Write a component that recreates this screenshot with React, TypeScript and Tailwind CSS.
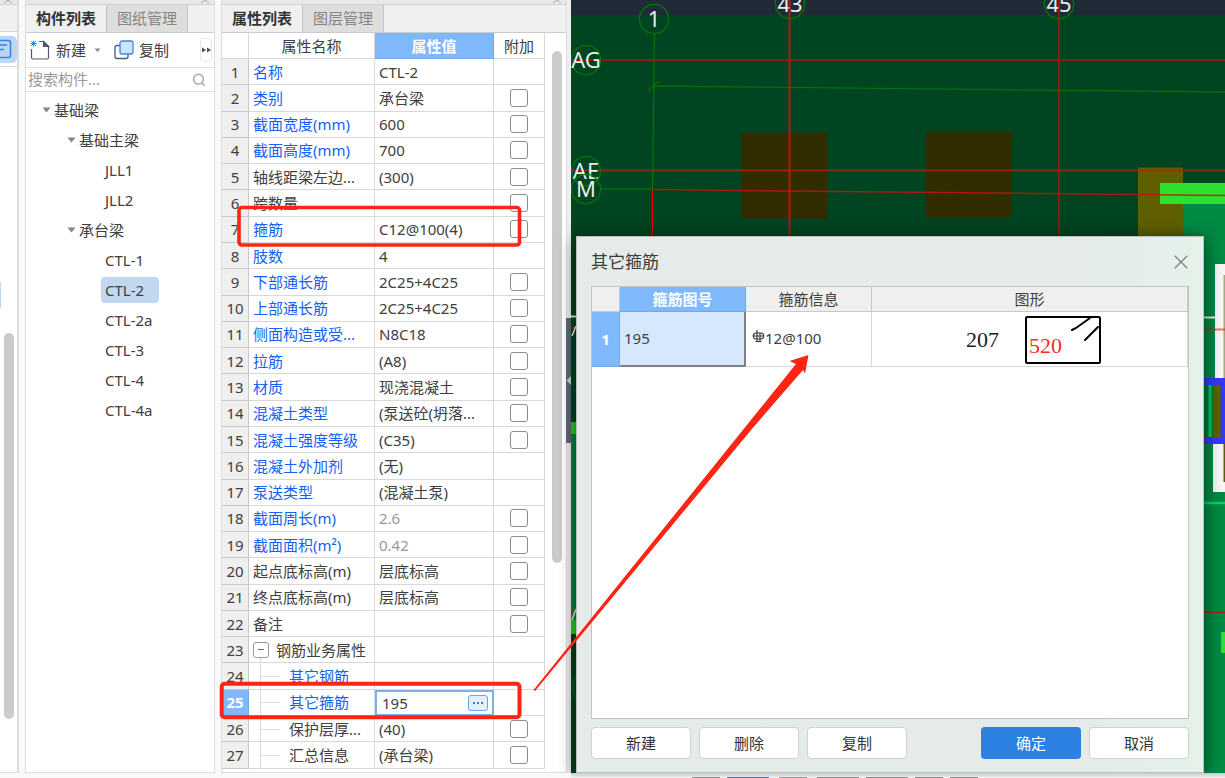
import React from "react";

type Prop = {
  name: string;
  value?: string;
  link?: boolean;
  check?: boolean;
  muted?: boolean;
  kind?: "group" | "child";
};

const props: Prop[] = [
  { name: "名称", value: "CTL-2", link: true },
  { name: "类别", value: "承台梁", link: true, check: true },
  { name: "截面宽度(mm)", value: "600", link: true, check: true },
  { name: "截面高度(mm)", value: "700", link: true, check: true },
  { name: "轴线距梁左边...", value: "(300)", check: true },
  { name: "跨数量", check: true },
  { name: "箍筋", value: "C12@100(4)", link: true, check: true },
  { name: "肢数", value: "4", link: true },
  { name: "下部通长筋", value: "2C25+4C25", link: true, check: true },
  { name: "上部通长筋", value: "2C25+4C25", link: true, check: true },
  { name: "侧面构造或受...", value: "N8C18", link: true, check: true },
  { name: "拉筋", value: "(A8)", link: true, check: true },
  { name: "材质", value: "现浇混凝土", link: true, check: true },
  { name: "混凝土类型", value: "(泵送砼(坍落...", link: true, check: true },
  { name: "混凝土强度等级", value: "(C35)", link: true, check: true },
  { name: "混凝土外加剂", value: "(无)", link: true },
  { name: "泵送类型", value: "(混凝土泵)", link: true },
  { name: "截面周长(m)", value: "2.6", link: true, check: true, muted: true },
  { name: "截面面积(m²)", value: "0.42", link: true, check: true, muted: true },
  { name: "起点底标高(m)", value: "层底标高", check: true },
  { name: "终点底标高(m)", value: "层底标高", check: true },
  { name: "备注", check: true },
  { name: "钢筋业务属性", kind: "group" },
  { name: "其它钢筋", link: true, kind: "child" },
  { name: "其它箍筋", value: "195", link: true, kind: "child" },
  { name: "保护层厚...", value: "(40)", check: true, kind: "child" },
  { name: "汇总信息", value: "(承台梁)", check: true, kind: "child" },
];

const SELECTED = 24;

const tree = [
  { label: "基础梁", level: 0 },
  { label: "基础主梁", level: 1 },
  { label: "JLL1", level: 2 },
  { label: "JLL2", level: 2 },
  { label: "承台梁", level: 1 },
  { label: "CTL-1", level: 2 },
  { label: "CTL-2", level: 2 },
  { label: "CTL-2a", level: 2 },
  { label: "CTL-3", level: 2 },
  { label: "CTL-4", level: 2 },
  { label: "CTL-4a", level: 2 },
];

const indent = ["pl-4", "pl-[41px]", "pl-[75px]"];

function TitleStrip() {
  return (
    <div className="flex h-[5px] shrink-0 items-start justify-end border-b border-[#cfd2d5] bg-[#e8e8e8] pr-1">
      <svg width="10" height="3" viewBox="0 0 10 3" fill="none" stroke="#a5a5a5">
        <path d="M1 3 5 0 9 3" />
      </svg>
    </div>
  );
}

function Tabs({ items, label }: { items: string[]; label: string }) {
  return (
    <div role="tablist" aria-label={label} className="flex h-7 shrink-0 border-b border-[#c8ccd0] bg-[#f0f0f0]">
      {items.map((t, i) => (
        <button
          key={t}
          role="tab"
          aria-selected={i === 0}
          className={
            i === 0
              ? "w-[81px] border-r border-[#bfc5ca] font-bold text-[#333]"
              : "w-[81px] border-r border-[#bfc5ca] bg-[#dedede] text-[#858585]"
          }
        >
          {t}
        </button>
      ))}
    </div>
  );
}

function SideStrip() {
  return (
    <aside className="relative flex w-[19px] shrink-0 flex-col border-r-2 border-b border-[#dcdcdc] bg-white">
      <TitleStrip />
      <div className="h-[27px] shrink-0 border-b border-[#d4d4d4] bg-[#f0f0f0]" />
      <div className="flex h-[35px] shrink-0 items-center border-b border-[#d4d4d4]">
        <button aria-label="列表视图" className="flex h-[27px] w-[17px] items-center rounded-r-[5px] bg-[#bdd7f2]">
          <svg width="12" height="20" viewBox="0 0 12 20" fill="none" stroke="#2e86e8" strokeWidth="1.6">
            <path d="M0 1.500H8.500Q10.500 1.500 10.500 3.500V16.500Q10.500 18.500 8.500 18.500H0" />
            <path d="M0 6H7M0 10.500H4" />
          </svg>
        </button>
      </div>
      <div className="absolute top-[282px] left-0 h-[26px] w-px bg-[#bdd7f2]" />
      <div className="absolute top-[333px] left-1 h-[386px] w-[10px] rounded-full bg-[#cbcbcb]" />
    </aside>
  );
}

function ComponentPanel() {
  return (
    <section className="flex w-[190px] shrink-0 flex-col border-x border-b border-[#dcdcdc] bg-white">
      <TitleStrip />
      <Tabs items={["构件列表", "图纸管理"]} label="构件" />
      <div className="flex h-[35px] shrink-0 items-center border-b border-[#dcdcdc] pl-1">
        <button className="flex items-center gap-[5px]">
          <svg width="21" height="20" viewBox="0 0 21 20" fill="none" stroke="#4c5a6c" strokeWidth="1.200">
            <path d="M1.500 9V17.500Q1.500 19 3 19H17Q18.500 19 18.500 17.500V6.500L13.500 1.500H9" />
            <path d="M13.500 1.500V6.500H18.500Z" fill="#4c5a6c" />
            <path d="M3.500 .5V6.500M.5 3.500H6.500M1.200 1.200 5.800 5.800M5.800 1.200 1.200 5.800" stroke="#2f8bf5" strokeWidth="1" />
          </svg>
          新建
        </button>
        <button aria-label="新建选项" className="ml-[7px] p-px">
          <svg width="7" height="5" viewBox="0 0 7 5" fill="#8a8a8a"><path d="M.5 .5H6.500L3.500 4Z" /></svg>
        </button>
        <button className="ml-3 flex items-center gap-[5px]">
          <svg width="20" height="20" viewBox="0 0 20 20" strokeWidth="1.300">
            <path d="M6 5.500H3Q1 5.500 1 7.500V16.500Q1 18.500 3 18.500H12Q14 18.500 14 16.500V14" fill="none" stroke="#4c5a6c" />
            <rect x="6" y="1" width="13" height="13" rx="2" fill="#cfe3fb" stroke="#2f8bf5" />
          </svg>
          复制
        </button>
        <button aria-label="更多" className="mr-[2px] ml-auto flex h-6 w-3 items-center justify-center rounded border border-[#e6e6e6]">
          <svg width="9" height="6" viewBox="0 0 9 6" className="shrink-0" fill="#444f60">
            <path d="M0 .5 4 3 0 5.500ZM5 .5 9 3 5 5.500Z" />
          </svg>
        </button>
      </div>
      <div className="flex h-6 shrink-0 items-center border-b border-[#dcdcdc] pr-2 pl-[2px]">
        <input aria-label="搜索构件" placeholder="搜索构件..." className="w-full min-w-0 outline-none placeholder:text-[#9a9a9a]" />
        <svg width="14" height="14" viewBox="0 0 14 14" className="shrink-0" fill="none" stroke="#a8a8a8" strokeWidth="1.500">
          <circle cx="6.500" cy="6.200" r="4.900" />
          <path d="M9.700 9.700 12.800 12.800" />
        </svg>
      </div>
      <ul className="flex flex-col pt-[3px]">
        {tree.map((n, i) => (
          <li key={n.label} className={`flex h-[30px] items-center ${indent[n.level]}`}>
            {n.level < 2 && (
              <svg width="9" height="6" viewBox="0 0 9 6" className="mr-[3px]" fill="#858585"><path d="M.5 .5H8.500L4.500 5.500Z" /></svg>
            )}
            <span className={i === 6 ? "flex h-[26px] w-[58px] items-center rounded bg-[#c1d8f0] pl-1" : n.level === 2 ? "pl-1" : ""}>
              {n.label}
            </span>
          </li>
        ))}
      </ul>
    </section>
  );
}

function NameCell({ p }: { p: Prop }) {
  if (p.kind === "group") {
    return (
      <div className="relative flex items-center gap-[7px]">
        <span className="absolute top-[18px] left-[7px] h-[6px] w-px bg-[#d8d8d8]" />
        <button aria-label="折叠" className="flex h-4 w-4 items-center justify-center rounded-[3px] border border-[#9a9a9a]">
          <span className="h-px w-[6px] bg-[#666]" />
        </button>
        {p.name}
      </div>
    );
  }
  if (p.kind === "child") {
    return (
      <div className="relative pl-9">
        <span className="absolute -top-1 -bottom-1 left-[7px] w-px bg-[#dedede]" />
        <span className="absolute top-[10px] left-[7px] h-px w-5 bg-[#dedede]" />
        {p.name}
      </div>
    );
  }
  return <>{p.name}</>;
}

function PropertyPanel() {
  return (
    <section className="relative flex w-[346px] shrink-0 flex-col overflow-hidden border-x border-b border-[#dcdcdc] bg-white">
      <TitleStrip />
      <Tabs items={["属性列表", "图层管理"]} label="属性" />
      <div className="flex min-h-0 flex-1 overflow-hidden">
        <table className="h-[736px] w-[323px] table-fixed border-separate border-spacing-0 leading-5">
          <colgroup>
            <col className="w-[27px]" />
            <col className="w-[126px]" />
            <col className="w-[119px]" />
            <col className="w-[51px]" />
          </colgroup>
          <thead>
            <tr className="h-[26px]">
              <th aria-label="序号" className="border-r border-b border-[#d8d8d8]" />
              <th className="border-r border-b border-[#d8d8d8] font-normal">属性名称</th>
              <th className="border-r border-b border-[#6fa9ea] bg-[#80b9fb] font-bold text-white">属性值</th>
              <th className="border-r border-b border-[#d8d8d8] font-normal">附加</th>
            </tr>
          </thead>
          <tbody>
            {props.map((p, i) => (
              <tr key={p.name}>
                <td
                  className={
                    i === SELECTED
                      ? "border-r border-b border-[#6fa9ea] bg-[#80b9fb] p-0 text-center font-bold text-white"
                      : "border-r border-b border-[#c8c8c8] bg-[#efefef] p-0 text-center"
                  }
                >
                  {i + 1}
                </td>
                <td className={`overflow-hidden border-r border-b border-[#d8d8d8] py-0 pr-0 pl-1 whitespace-nowrap ${p.link ? "text-[#1560f5]" : ""}`}>
                  <NameCell p={p} />
                </td>
                {i === SELECTED ? (
                  <td className="border-2 border-[#7cb0e8] p-0">
                    <div className="flex h-4 items-center pr-1 pl-[5px]">
                      <input aria-label="其它箍筋" defaultValue="195" className="w-full min-w-0 leading-4 outline-none" />
                      <button aria-label="编辑其它箍筋" className="flex h-4 w-5 shrink-0 items-center justify-center gap-[2px] rounded-[3px] border border-[#65a5ea] bg-[#e4effc]">
                        <span className="size-[2px] bg-[#2f7fdc]" />
                        <span className="size-[2px] bg-[#2f7fdc]" />
                        <span className="size-[2px] bg-[#2f7fdc]" />
                      </button>
                    </div>
                  </td>
                ) : (
                  <td className={`border-r border-b border-[#d8d8d8] py-0 pr-0 pl-1 whitespace-nowrap ${p.muted ? "text-[#999]" : ""}`}>{p.value}</td>
                )}
                <td className="border-r border-b border-[#d8d8d8] p-0">
                  {p.check && (
                    <input type="checkbox" aria-label={`附加 ${p.name}`} className="mx-auto block size-[18px] appearance-none rounded-[3px] border border-[#8c8c8c] bg-white" />
                  )}
                </td>
              </tr>
            ))}
          </tbody>
        </table>
      </div>
      <div className="absolute top-[51px] right-[4px] h-[512px] w-[10px] rounded-full bg-[#cbcbcb]" />
    </section>
  );
}

function ring(cx: number, cy: number, r: number) {
  return Array.from({ length: 11 }, (_, k) => {
    const a = (k / 11) * Math.PI * 2 + Math.PI / 2;
    return `${(cx + r * Math.cos(a)).toFixed(1)},${(cy + r * Math.sin(a)).toFixed(1)}`;
  }).join(" ");
}

const axes = [
  { t: "1", x: 83, y: 19 },
  { t: "43", x: 219, y: 4 },
  { t: "45", x: 488, y: 4 },
  { t: "AG", x: 15, y: 60 },
  { t: "AE", x: 15, y: 171 },
  { t: "M", x: 15, y: 189 },
];

function Drawing() {
  return (
    <svg className="block h-full w-full" fill="none" aria-label="平面图">
      <rect width="100%" height="100%" fill="#004421" />
      <rect width="100%" height="15" fill="#212b37" />
      <path d="M170.500 132.500h86v86h-86zM355 131h86v86h-86z" fill="#322d00" />
      <path d="M612 203H1200V800H612z" fill="#008a43" />
      <path d="M567 167.500h45v100h-45z" fill="#5f5f00" />
      <path d="M589 183H1200V204H589z" fill="#2ce02c" />
      <g>
        <path d="M83.500 34 81.500 189M83 86 654 92M77 91 88 81M30 189H82" stroke="#007208" strokeWidth="1.300" />
        <path d="M0 60H1200" stroke="#b0120a" strokeWidth="1.600" />
        <path d="M0 170.500H1200" stroke="#c01c0e" strokeOpacity=".7" strokeWidth="2" />
        <path d="M82 189.500 654 195.500" stroke="#c0150a" strokeOpacity=".85" strokeWidth="1.500" />
        <path d="M81.500 189V240" stroke="#f00000" strokeWidth="1.200" />
      </g>
      <g fill="#fff" fontSize="22" textAnchor="middle" fontFamily="Noto Sans, sans-serif">
        {axes.map((a) => (
          <g key={a.t}>
            <polygon points={ring(a.x, a.y, 15)} fill="none" stroke="#00780a" strokeWidth="1.200" />
            <text x={a.x} y={a.y + 8} fillOpacity=".92">{a.t}</text>
          </g>
        ))}
      </g>
      <path d="M218.500 0V240" stroke="#d0200c" strokeOpacity=".55" strokeWidth="2.600" />
      <path d="M488 0V240" stroke="#c0120a" strokeOpacity=".9" strokeWidth="1.500" />
      {/* right edge */}
      <path d="M644 264H1200V378H644zM642 444H1200V492H642z" fill="#f6f6f6" />
      <path d="M652.500 275H1200V378H652.500z" fill="#a7aa7c" />
      <path d="M652.500 444H1200V482H652.500z" fill="#5f5f00" />
      <path d="M630 317.500H645" stroke="#e8f5ee" strokeWidth="2" />
      <path d="M630 329.500H1200" stroke="#f01010" strokeOpacity=".6" strokeWidth="2" />
      <path d="M630 378H1200V444H630z" fill="#3737fa" />
      <path d="M630 385H649.500V437H630z" fill="#007a3a" />
      <path d="M642 385h7.500v52h-7.500z" fill="#5f5f00" />
      <path d="M639 385V437" stroke="#00c862" strokeWidth="3" />
      <path d="M630 503H1200" stroke="#00d667" strokeWidth="2.400" />
      <path d="M630 612.500H1200" stroke="#a8200f" strokeWidth="1.600" />
      <path d="M650 632h40v21h-40z" fill="#2ce02c" />
      {/* left edge */}
      <path d="M0 422H8V634H0z" fill="#008a43" />
      <path d="M0 422H8V434H0zM0 620H8V634H0z" fill="#26d426" />
      <path d="M0 316.500H8" stroke="#e8f5ee" strokeWidth="2" />
      <path d="M1 336 5 326M1 620 5 609" stroke="#e8f0ea" strokeWidth="1.600" />
      <path d="M1 328H3M1 611H3" stroke="#e02010" strokeWidth="2" />
      <path d="M6 675Q-3 688 6 700" stroke="#00780a" />
    </svg>
  );
}

const plain = "h-8 w-[100px] rounded border border-[#cfd3d2] bg-white text-[#333]";

function StirrupDialog() {
  return (
    <div
      role="dialog"
      aria-label="其它箍筋"
      className="absolute top-[236px] right-[21px] bottom-0 left-[5px] flex flex-col border border-[#bcc0be] bg-[#e4ebe8] bg-linear-to-r from-[#e4ebe8] from-80% to-[#e4f2ea] px-[14px] pb-[13px] shadow-[0_2px_16px_rgba(0,0,0,0.6)]"
    >
      <div className="flex h-[49px] shrink-0 items-center justify-between">
        <h2 className="text-[17px] text-[#3a3a3a]">其它箍筋</h2>
        <button aria-label="关闭" className="pr-px">
          <svg width="14" height="14" viewBox="0 0 14 14" fill="none" stroke="#808080" strokeWidth="1.300">
            <path d="M.7 .7 13.300 13.300M13.300 .7 .7 13.300" />
          </svg>
        </button>
      </div>
      <div className="min-h-0 flex-1 border border-[#c4c4c4] bg-white">
        <table className="w-full table-fixed border-separate border-spacing-0">
          <colgroup>
            <col className="w-7" />
            <col className="w-[126px]" />
            <col className="w-[126px]" />
            <col />
          </colgroup>
          <thead>
            <tr className="h-[25px] bg-[#efefef]">
              <th aria-label="序号" className="border-r border-b border-[#c8c8c8]" />
              <th className="border-r border-b border-[#6fa9ea] bg-[#80b9fb] p-0 font-bold text-white">箍筋图号</th>
              <th className="border-r border-b border-[#c8c8c8] p-0 font-normal">箍筋信息</th>
              <th className="border-r border-b border-[#c8c8c8] p-0 font-normal">图形</th>
            </tr>
          </thead>
          <tbody>
            <tr className="h-[55px]">
              <td className="border-r border-b border-[#6fa9ea] bg-[#80b9fb] p-0 text-center font-bold text-white">1</td>
              <td className="border-r-2 border-b-2 border-[#808080] bg-[#d5e8fe] py-0 pr-0 pl-1">195</td>
              <td className="border-r border-b border-[#d8d8d8] pt-0 pr-0 pb-[2px] pl-[6px]">
                <span className="flex items-center">
                  <svg width="13" height="13" viewBox="0 0 13 13" className="mb-1" fill="none" stroke="#333" strokeWidth="1.100">
                    <rect x="1.500" y="3" width="10" height="6" rx="2.500" />
                    <path d="M5 0V11.500M8 3V11.500M.5 6H12.500M3.500 11.500H9.500" />
                  </svg>
                  12@100
                </span>
              </td>
              <td className="border-r border-b border-[#d8d8d8] py-0 pr-0 pl-2">
                <svg width="136" height="52" viewBox="0 0 136 52" className="mx-auto block" fontFamily="Liberation Serif, serif" fontSize="22">
                  <text x="0" y="34" fill="#1c1c1c">207</text>
                  <rect x="60" y="4" width="74" height="46" rx="1" fill="none" stroke="#000" strokeWidth="2" />
                  <text x="63" y="40" fill="#ff2a2a">520</text>
                  <path d="M106 17 110 15 124 5M119 27 132 14" fill="none" stroke="#000" strokeWidth="2" strokeLinecap="round" />
                </svg>
              </td>
            </tr>
          </tbody>
        </table>
      </div>
      <div className="flex shrink-0 gap-2 pt-2">
        <button className={plain}>新建</button>
        <button className={plain}>删除</button>
        <button className={plain}>复制</button>
        <button className="ml-auto h-8 w-[100px] rounded bg-[#2c80e2] text-white">确定</button>
        <button className={plain}>取消</button>
      </div>
    </div>
  );
}

export default function App() {
  return (
    <div className="relative flex h-screen flex-col overflow-hidden bg-[#f9f9f9] font-['Noto_Sans','Noto_Sans_CJK_SC',sans-serif] text-[15px] text-[#404040]">
      <div className="flex min-h-0 flex-1">
        <SideStrip />
        <div className="w-[6px] shrink-0" />
        <ComponentPanel />
        <div className="w-[6px] shrink-0" />
        <PropertyPanel />
        <div className="w-1 shrink-0 bg-[#efefef]" />
        <main className="relative min-w-0 flex-1">
          <Drawing />
          <button aria-label="收起面板" className="absolute top-[318px] -left-[5px] flex h-[125px] w-[5px] items-center bg-[#5f6875]">
            <svg width="5" height="9" viewBox="0 0 5 9" fill="#ccd0d5"><path d="M5 0V9L.5 4.500Z" /></svg>
          </button>
          <StirrupDialog />
        </main>
      </div>
      <div className="relative flex h-[5px] shrink-0 items-end bg-linear-to-b from-[#c9c9c9] to-[#f4f4f4] pl-[692px]">
        <div className="absolute inset-y-0 left-0 w-[571px] bg-[#f9f9f9]" />
        <div className="flex gap-[7px]">
          <span className="h-px w-7 bg-[#888]" />
          <span className="h-px w-[42px] bg-[#3c6ea8]" />
          <span className="mx-[3px] h-px w-7 bg-[#999]" />
          <span className="h-px w-[42px] bg-[#888]" />
          <span className="h-px w-[42px] bg-[#888]" />
          <span className="h-px w-7 bg-[#888]" />
          <span className="h-px w-7 bg-[#888]" />
        </div>
      </div>
      <svg className="pointer-events-none absolute inset-0 h-full w-full" fill="none" stroke="#ff2414">
        <rect x="239" y="207.500" width="280.500" height="37.500" rx="3" strokeWidth="3.600" />
        <rect x="221.700" y="683.700" width="297.800" height="33.500" rx="3" strokeWidth="4" />
        <path d="M533.500 690 796 364 789.500 361 808.500 355 805 373.500 803 370 751 430 535 691Z" fill="#ff2414" stroke="none" />
      </svg>
    </div>
  );
}
